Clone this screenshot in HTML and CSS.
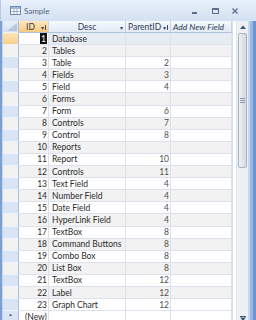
FILE: index.html
```html
<!DOCTYPE html>
<html lang="en">
<head>
    <meta charset="UTF-8">
    <title>Sample</title>
    <link rel="stylesheet" href="styles.css">
</head>
<body>
    <div class="window">
        <div class="titlebar">
            <svg class="title-icon" width="11" height="9" viewBox="0 0 11 9">
                <rect x="0.5" y="0.5" width="10" height="8" fill="#fff" stroke="#7288ad"/>
                <rect x="1" y="1" width="9" height="2" fill="#9fb9de"/>
                <path d="M1 5.5h9M4 3v5M7 3v5" stroke="#9aaccb" stroke-width="1"/>
            </svg>
            <span class="title-text">Sample</span>
            <div class="winbtns">
                <span class="winbtn"><svg width="6" height="6" viewBox="0 0 6 6"><rect x="0" y="4" width="5" height="2" fill="#5d6f8e"/></svg></span>
                <span class="winbtn"><svg width="7" height="6" viewBox="0 0 7 6"><rect x="0.5" y="0.5" width="6" height="5" fill="none" stroke="#5d6f8e"/><rect x="0" y="0" width="7" height="2" fill="#5d6f8e"/></svg></span>
                <span class="winbtn"><svg width="6" height="6" viewBox="0 0 6 6"><path d="M0.5 0.5l5 5M5.5 0.5l-5 5" stroke="#5d6f8e" stroke-width="1.3"/></svg></span>
            </div>
        </div>

        <div class="main">
            <div class="frame-left"></div>

            <div class="grid">
                <div class="row head">
                    <span class="sel corner"><svg width="10" height="8" viewBox="0 0 10 8"><path d="M10 0V8H0Z" fill="#b9c7db"/></svg></span>
                    <span class="hcell active">ID<i class="hmark">&#9662;<b class="sort"></b></i></span>
                    <span class="hcell">Desc<i class="hmark">&#9662;</i></span>
                    <span class="hcell left">ParentID<i class="hmark">&#9662;<b class="sort"></b></i></span>
                    <span class="hcell left newfield">Add New Field</span>
                </div>

                <div class="row current"><span class="sel"></span><span class="num edit"><em>1</em></span><span class="txt">Database</span><span class="num"></span><span></span></div>
                <div class="row alt"><span class="sel"></span><span class="num">2</span><span class="txt">Tables</span><span class="num"></span><span></span></div>
                <div class="row"><span class="sel"></span><span class="num">3</span><span class="txt">Table</span><span class="num pid">2</span><span></span></div>
                <div class="row alt"><span class="sel"></span><span class="num">4</span><span class="txt">Fields</span><span class="num pid">3</span><span></span></div>
                <div class="row"><span class="sel"></span><span class="num">5</span><span class="txt">Field</span><span class="num pid">4</span><span></span></div>
                <div class="row alt"><span class="sel"></span><span class="num">6</span><span class="txt">Forms</span><span class="num pid"></span><span></span></div>
                <div class="row"><span class="sel"></span><span class="num">7</span><span class="txt">Form</span><span class="num pid">6</span><span></span></div>
                <div class="row alt"><span class="sel"></span><span class="num">8</span><span class="txt">Controls</span><span class="num pid">7</span><span></span></div>
                <div class="row"><span class="sel"></span><span class="num">9</span><span class="txt">Control</span><span class="num pid">8</span><span></span></div>
                <div class="row alt"><span class="sel"></span><span class="num">10</span><span class="txt">Reports</span><span class="num pid"></span><span></span></div>
                <div class="row"><span class="sel"></span><span class="num">11</span><span class="txt">Report</span><span class="num pid">10</span><span></span></div>
                <div class="row alt"><span class="sel"></span><span class="num">12</span><span class="txt">Controls</span><span class="num pid">11</span><span></span></div>
                <div class="row"><span class="sel"></span><span class="num">13</span><span class="txt">Text Field</span><span class="num pid">4</span><span></span></div>
                <div class="row alt"><span class="sel"></span><span class="num">14</span><span class="txt">Number Field</span><span class="num pid">4</span><span></span></div>
                <div class="row"><span class="sel"></span><span class="num">15</span><span class="txt">Date Field</span><span class="num pid">4</span><span></span></div>
                <div class="row alt"><span class="sel"></span><span class="num">16</span><span class="txt">HyperLink Field</span><span class="num pid">4</span><span></span></div>
                <div class="row"><span class="sel"></span><span class="num">17</span><span class="txt">TextBox</span><span class="num pid">8</span><span></span></div>
                <div class="row alt"><span class="sel"></span><span class="num">18</span><span class="txt">Command Buttons</span><span class="num pid">8</span><span></span></div>
                <div class="row"><span class="sel"></span><span class="num">19</span><span class="txt">Combo Box</span><span class="num pid">8</span><span></span></div>
                <div class="row alt"><span class="sel"></span><span class="num">20</span><span class="txt">List Box</span><span class="num pid">8</span><span></span></div>
                <div class="row"><span class="sel"></span><span class="num">21</span><span class="txt">TextBox</span><span class="num pid">12</span><span></span></div>
                <div class="row alt"><span class="sel"></span><span class="num">22</span><span class="txt">Label</span><span class="num pid">12</span><span></span></div>
                <div class="row"><span class="sel"></span><span class="num">23</span><span class="txt">Graph Chart</span><span class="num pid">12</span><span></span></div>
                <div class="row newrow"><span class="sel star">*</span><span class="txt new">(New)</span><span></span><span></span><span></span></div>
            </div>

            <div class="gutter"></div>

            <div class="scroll">
                <div class="sb-btn"><svg width="6" height="4" viewBox="0 0 6 4"><path d="M0 4L3 0.5L6 4Z" fill="#3f5476"/></svg></div>
                <div class="sb-thumb"><svg width="5" height="5" viewBox="0 0 5 5"><path d="M0 0.5h5M0 2.5h5M0 4.5h5" stroke="#8c99ad"/></svg></div>
                <div class="sb-track"></div>
                <div class="sb-btn"><svg width="6" height="5" viewBox="0 0 6 5"><path d="M0 0.5h6" stroke="#3f5476"/><path d="M0 1.5L3 5L6 1.5Z" fill="#3f5476"/></svg></div>
            </div>

            <div class="frame-right"></div>
        </div>
    </div>
</body>
</html>
```

FILE: styles.css
```css
* {
    box-sizing: border-box;
}
body {
    margin: 0;
    width: 256px;
    height: 320px;
    overflow: hidden;
    background-color: #fff;
    font-family: Lato, "Liberation Sans", sans-serif;
    color: #2b2b2b;
}
.window {
    display: flex;
    flex-direction: column;
    height: 324px;
}
.titlebar {
    height: 21px;
    display: flex;
    align-items: center;
    padding-left: 9px;
    background: linear-gradient(#e8f0fa, #d4e1f2);
    border-left: 1px solid #b5c9e8;
}
.title-icon {
    display: block;
}
.title-text {
    margin-left: 3px;
    font-size: 8px;
    color: #56657f;
}
.winbtns {
    margin-left: auto;
    display: flex;
    padding-right: 11px;
}
.winbtn {
    width: 20px;
    height: 21px;
    display: flex;
    align-items: center;
    justify-content: center;
}
.main {
    flex: 1;
    display: flex;
    min-height: 0;
}
.frame-left {
    width: 3px;
    background: linear-gradient(to right, #7e9ed6 0, #7e9ed6 2px, #c3d5ee 2px);
}
.grid {
    width: 229px;
    display: flex;
    flex-direction: column;
}
.row {
    display: grid;
    grid-template-columns: 16px 30px 77px 45px 61px;
    height: 12.1px;
    flex: none;
    font-size: 8.5px;
}
.row > span {
    display: flex;
    align-items: center;
    border-right: 1px solid #dce2eb;
    border-bottom: 1px solid #dce2eb;
    white-space: nowrap;
    overflow: hidden;
}
.row.alt > span {
    background-color: #f2f2f2;
}
.row.current > span {
    background-color: #e7ecf4;
}
.row > .sel {
    background: #d9e4f4;
    border-right: 1px solid #a9bddb;
    border-bottom: 1px solid #eef3fa;
}
.row.current > .sel {
    background: linear-gradient(#fde6b8, #f8cf8a);
}
.num {
    justify-content: flex-end;
    padding-right: 1px;
}
.pid {
    color: #505050;
}
.txt {
    padding-left: 3px;
}
.row.current > .edit {
    background-color: #fff;
}
.edit em {
    font-style: normal;
    background-color: #111;
    color: #fff;
    padding: 1px 1px 0 1px;
}
.head {
    height: 12px;
}
.head > span {
    background: linear-gradient(#f6f9fd, #e2eaf5);
    border-right: 1px solid #c8d4e6;
    border-bottom: 1px solid #aec0da;
    justify-content: center;
    color: #2f3d55;
    position: relative;
}
.head > .corner {
    background: linear-gradient(#e9eff8, #d6e1f1);
    border-right: 1px solid #a9bddb;
    align-items: flex-end;
    justify-content: flex-end;
    padding: 0 1px 1px 0;
}
.head > .active {
    background: linear-gradient(#fde7bd, #f7cb80);
    padding-right: 6px;
}
.head > .left {
    justify-content: flex-start;
    padding-left: 2px;
}
.hmark {
    position: absolute;
    right: 2px;
    top: 1px;
    font-style: normal;
    font-size: 6px;
    color: #3a4a66;
    display: flex;
    align-items: center;
    height: 10px;
}
.sort {
    display: block;
    width: 1px;
    height: 5px;
    margin-left: 1px;
    background-color: #3a4a66;
}
.newfield {
    font-style: italic;
    color: #4f6080;
}
.newrow > span {
    background-color: #fff;
}
.row > .star {
    justify-content: center;
    font-size: 8px;
    color: #2b2b2b;
}
.new {
    padding-left: 6px;
}
.gutter {
    width: 4px;
    border-left: 1px solid #d3def0;
    background-color: #fff;
}
.scroll {
    width: 12px;
    display: flex;
    flex-direction: column;
    background-color: #eef0f4;
    border-left: 1px solid #e0e5ec;
}
.sb-btn {
    height: 12px;
    display: flex;
    align-items: center;
    justify-content: center;
}
.sb-thumb {
    height: 135px;
    margin: 0 1px 0 1px;
    border: 1px solid #a8b3c5;
    border-radius: 2px;
    background: linear-gradient(to right, #eef1f5, #d3d9e2);
    display: flex;
    align-items: center;
    justify-content: center;
}
.sb-track {
    flex: 1;
}
.frame-right {
    width: 8px;
    background: linear-gradient(to right, #c6d9f3 0, #c6d9f3 2px, #9ab8e8 2px, #9ab8e8 5px, #6f93d1 5px);
}
```
